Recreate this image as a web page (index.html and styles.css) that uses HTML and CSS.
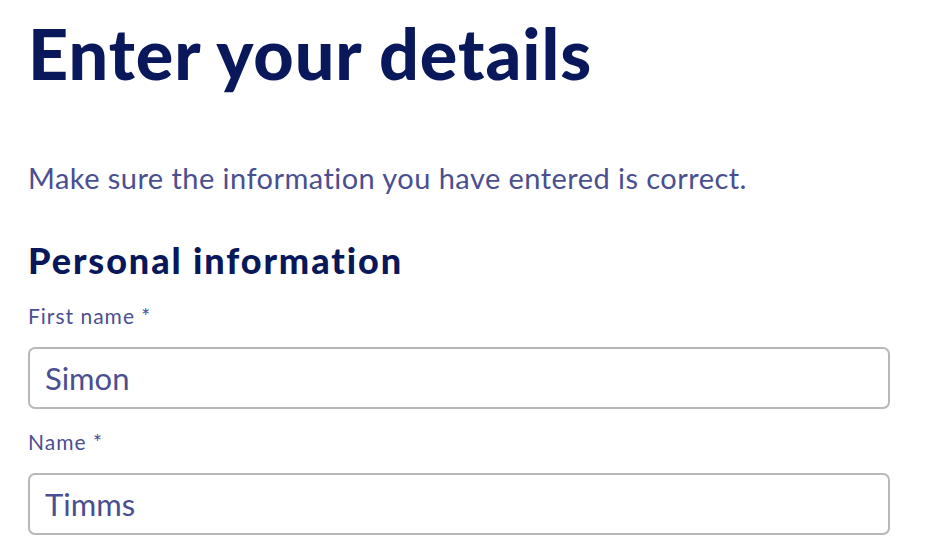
FILE: index.html
```html
<!DOCTYPE html>
<html lang="en">
<head>
<meta charset="utf-8">
<title>Enter your details</title>
<link rel="stylesheet" href="styles.css">
</head>
<body>
<main class="page">
  <h1 class="title">Enter your details</h1>
  <p class="intro">Make sure the information you have entered is correct.</p>
  <h2 class="section">Personal information</h2>
  <div class="fields">
    <div class="field">
      <label class="label" for="first">First name *</label>
      <input class="input" id="first" type="text" value="Simon">
    </div>
    <div class="field">
      <label class="label" for="last">Name *</label>
      <input class="input" id="last" type="text" value="Timms">
    </div>
  </div>
</main>
</body>
</html>
```
FILE: styles.css
```css
html, body {
  margin: 0;
  padding: 0;
  background: #ffffff;
}
.page {
  font-family: Lato, "Noto Sans", sans-serif;
  width: 862px;
  padding: 0 0 0 28px;
  display: flex;
  flex-direction: column;
}
.title {
  margin: 11px 0 0 0;
  font-size: 70px;
  line-height: 84px;
  letter-spacing: 1px;
  font-weight: 900;
  color: #08185a;
}
.intro {
  margin: 65px 0 0 0;
  font-size: 29px;
  line-height: 36px;
  letter-spacing: 0.45px;
  color: #4a4f91;
}
.section {
  margin: 43px 0 0 0;
  font-size: 36px;
  line-height: 42px;
  letter-spacing: 1.9px;
  font-weight: 900;
  color: #08185a;
}
.fields {
  margin-top: 22px;
  display: flex;
  flex-direction: column;
  gap: 20px;
}
.field {
  display: flex;
  flex-direction: column;
}
.label {
  font-size: 21px;
  line-height: 26px;
  letter-spacing: 1px;
  color: #4a4f91;
}
.input {
  margin-top: 18px;
  height: 62px;
  box-sizing: border-box;
  border: 2px solid #b8b8b8;
  border-radius: 7px;
  padding: 0 15px;
  font-family: Lato, "Noto Sans", sans-serif;
  font-size: 31px;
  color: #4a4f91;
  background: #ffffff;
  outline: none;
}
```
